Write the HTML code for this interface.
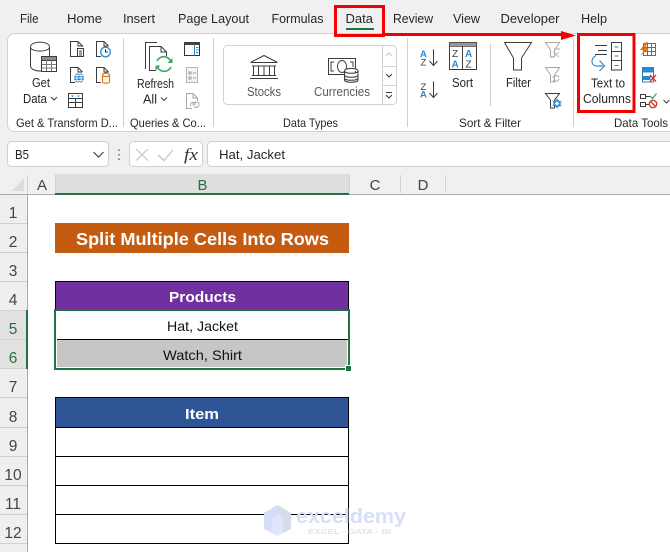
<!DOCTYPE html>
<html><head><meta charset="utf-8">
<style>
html,body{margin:0;padding:0;width:670px;height:552px;overflow:hidden;background:#f0f0f0}
svg{display:block}
text{font-family:"Liberation Sans",sans-serif;font-size:13px;fill:#262626}
.g{fill:#5a5a5a}
.n{font-size:15.5px;fill:#444;text-anchor:middle}
.b{font-weight:bold;fill:#fff}
.k{fill:none;stroke:#3c3c3c;stroke-width:1}
.l{fill:none;stroke:#a6a6a6;stroke-width:1}
.u{fill:none;stroke:#2a8bd5;stroke-width:1.2}
.m{font-size:9.5px;font-weight:bold;fill:#2a8bd5}
.z{font-size:9.5px;fill:#3c3c3c}
</style></head>
<body>
<svg width="670" height="552" viewBox="0 0 670 552" xmlns="http://www.w3.org/2000/svg">
<rect width="670" height="552" fill="#f0f0f0"/>
<!-- tabs -->
<text x="20" y="23" textLength="18.5" lengthAdjust="spacingAndGlyphs">File</text>
<text x="67" y="23" textLength="35" lengthAdjust="spacingAndGlyphs">Home</text>
<text x="123" y="23" textLength="32" lengthAdjust="spacingAndGlyphs">Insert</text>
<text x="178" y="23" textLength="71" lengthAdjust="spacingAndGlyphs">Page Layout</text>
<text x="271.500" y="23" textLength="52" lengthAdjust="spacingAndGlyphs">Formulas</text>
<text x="345.500" y="23" textLength="27.500" lengthAdjust="spacingAndGlyphs">Data</text>
<rect x="346" y="28" width="28" height="2" fill="#107c41"/>
<text x="393" y="23" textLength="40" lengthAdjust="spacingAndGlyphs">Review</text>
<text x="453" y="23" textLength="27" lengthAdjust="spacingAndGlyphs">View</text>
<text x="500.500" y="23" textLength="59" lengthAdjust="spacingAndGlyphs">Developer</text>
<text x="581" y="23" textLength="26" lengthAdjust="spacingAndGlyphs">Help</text>
<!-- ribbon -->
<rect x="7.500" y="33.500" width="690" height="98" rx="7" fill="#fff" stroke="#d2d2d2"/>
<g stroke="#d0d0d0" stroke-width="1">
<path d="M123.500 38V127M213.500 38V127M407.500 38V127M573.500 38V127M490.500 44V106"/>
</g>
<!-- Get data -->
<path class="k" d="M30.500 47V66C30.500 69 35 71 41 71M49.500 47V56M30.500 47C30.500 40.500 49.500 40.500 49.500 47C49.500 52.500 30.500 52.500 30.500 47Z" fill="#fff"/>
<rect x="41.500" y="56.500" width="15" height="15" fill="#fff" stroke="#3c3c3c"/>
<rect x="41.500" y="56.500" width="15" height="4" fill="#8c8c8c" stroke="#3c3c3c"/>
<path d="M46.500 60V71M51.500 60V71M42 64.500H56M42 68H56" stroke="#7a7a7a" fill="none"/>
<text x="32" y="87" textLength="18" lengthAdjust="spacingAndGlyphs">Get</text>
<text x="23" y="103" textLength="24" lengthAdjust="spacingAndGlyphs">Data</text>
<path class="k" d="M51 97l3 3 3-3"/>
<!-- small docs -->
<path class="k" d="M77 56.500H70.500V41.500H78L82.500 46V47M78 41.500V46H82.500"/>
<rect x="77.500" y="48.500" width="6" height="8" fill="#fff" stroke="#3c3c3c"/>
<path class="k" d="M79 51H82M79 53H82M79 55H82" stroke-width=".8"/>
<path class="k" d="M101 56.500H96.500V41.500H104L108.500 46"/>
<path class="k" d="M104 41.500V46H108.500"/>
<circle cx="105.500" cy="52" r="4.800" fill="#fff" stroke="#2a8bd5" stroke-width="1.300"/>
<path d="M105.500 49V52H108" fill="none" stroke="#333"/>
<path class="k" d="M75 82.500H70.500V67.500H78L82.500 72M78 67.500V72H82.500"/>
<circle cx="79" cy="78" r="5" fill="#2a8bd5"/>
<path d="M74 78H84M79 73C76 76 76 80 79 83M79 73C82 76 82 80 79 83M75 75.500H83M75 80.500H83" stroke="#fff" fill="none" stroke-width=".8"/>
<path class="k" d="M101 82.500H96.500V67.500H104L108.500 72M104 67.500V72H108.500"/>
<path d="M102.500 75V82C102.500 83.500 109.500 83.500 109.500 82V75M102.500 75C102.500 72.500 109.500 72.500 109.500 75C109.500 77 102.500 77 102.500 75Z" fill="#fff" stroke="#e0760f" stroke-width="1.200"/>
<rect x="68.500" y="93.500" width="14" height="14" fill="#fff" stroke="#3c3c3c"/>
<path class="k" d="M68.500 98.500H82.500M68.500 102.500H82.500M75.500 98.500V107.500"/>
<path d="M71 95.500h3l-1.500 1.500zM77 95.500h3l-1.500 1.500z" fill="#2a8bd5"/>
<!-- Refresh -->
<path class="k" d="M145.500 69V42.500H157"/>
<path class="k" d="M156 70.500H149.500V46.500H161L166.500 52V56M161 46.500V52H166.500"/>
<path d="M157 61A7.500 7.500 0 0 1 171 62" fill="none" stroke="#3ea661" stroke-width="1.600"/>
<path d="M171 67A7.500 7.500 0 0 1 157 66" fill="none" stroke="#3ea661" stroke-width="1.600"/>
<path d="M172.500 58V63H167.500zM155.500 70.500V65.500H160.500z" fill="#3ea661"/>
<text x="137" y="88" textLength="37" lengthAdjust="spacingAndGlyphs">Refresh</text>
<text x="143" y="103.500" textLength="14" lengthAdjust="spacingAndGlyphs">All</text>
<path class="k" d="M161 97.500l3 3 3-3"/>
<rect x="184.500" y="42.500" width="15" height="13" fill="#fff" stroke="#333"/>
<rect x="184.500" y="42.500" width="15" height="2.500" fill="#444"/>
<path d="M194.500 45V55.500" stroke="#2a8bd5"/>
<path d="M196 47.500h2.500M196 50h2.500M196 52.500h2.500" stroke="#2a8bd5"/>
<rect x="186.500" y="67.500" width="11" height="15" fill="#f4f4f4" stroke="#b5b5b5"/>
<path d="M189 72h2v2h-2zM189 77h2v2h-2zM193 73h3M193 78h3" fill="none" stroke="#a0a0a0"/>
<path class="l" d="M192 108.500H186.500V93.500H193L197.500 98V101M193 93.500V98H197.500"/>
<path class="l" d="M191 106c-2-3 3-5 4-3s-2 3-2 1 6-3 6 0-3 4-5 3"/>
<!-- gallery -->
<rect x="223.500" y="45.500" width="173" height="59" rx="4" fill="#fff" stroke="#d0d0d0"/>
<path d="M382.500 46V104M383 66.500H396M383 85.500H396" stroke="#d0d0d0"/>
<path d="M386 56l3-3 3 3" fill="none" stroke="#c8c8c8"/>
<path class="k" d="M386 74l3 3 3-3"/>
<path class="k" d="M386 92.500h6M386 95l3 3 3-3"/>
<path class="k" d="M250.500 62.500L264 55.500L277.500 62.500ZM252 66H276M253.500 66V75M258.500 66V75M264 66V75M269.500 66V75M274.500 66V75M252 75.500H276M250 78.500H278"/>
<text x="247" y="96" class="g" textLength="34" lengthAdjust="spacingAndGlyphs">Stocks</text>
<rect x="328.500" y="58.500" width="27" height="16" fill="#fff" stroke="#3c3c3c"/>
<path class="k" d="M334 62H331V71H334M350 62H353V67"/>
<ellipse cx="342" cy="66.500" rx="4.500" ry="6" class="k"/>
<path d="M344.500 71V80C344.500 83 358 83 358 80V71M344.500 71C344.500 67.500 358 67.500 358 71C358 74 344.500 74 344.500 71ZM344.500 75C344.500 78 358 78 358 75M344.500 78C344.500 81 358 81 358 78" fill="#fff" stroke="#3c3c3c"/>
<text x="314" y="96" class="g" textLength="56" lengthAdjust="spacingAndGlyphs">Currencies</text>
<!-- sort -->
<text x="420" y="57" class="m">A</text><text x="420.500" y="65.500" class="z">Z</text>
<path class="k" d="M433.500 49.500V65M429.500 61l4 4.500 4-4.500"/>
<text x="420.500" y="90" class="z">Z</text><text x="420" y="97.500" class="m">A</text>
<path class="k" d="M433.500 81.500V97M429.500 93l4 4.500 4-4.500"/>
<rect x="449.500" y="42.500" width="27" height="27" fill="#fff" stroke="#3c3c3c"/>
<rect x="449.500" y="42.500" width="27" height="4" fill="#999" stroke="#3c3c3c" stroke-width=".6"/>
<path class="k" d="M462.500 46V69"/>
<text x="452" y="57" class="z" style="font-size:10px">Z</text><text x="451.500" y="67.500" class="m" style="font-size:10px">A</text>
<text x="465" y="57" class="m" style="font-size:10px">A</text><text x="465.500" y="67.500" class="z" style="font-size:10px">Z</text>
<text x="452" y="87" textLength="21" lengthAdjust="spacingAndGlyphs">Sort</text>
<path fill="#fff" stroke="#3c3c3c" d="M504.500 42.500H531.500L521.500 58V70H513.500V58Z"/>
<text x="506" y="87" textLength="25" lengthAdjust="spacingAndGlyphs">Filter</text>
<path class="l" d="M545.500 42.500H559.500L554.500 50V57H550.500V50ZM554 49H560" fill="#eee"/>
<path d="M553 52l6 5M559 52l-6 5" stroke="#b8b8b8" fill="none"/>
<path class="l" d="M545.500 67.500H559.500L554.500 75V82H550.500V75Z" fill="#eee"/>
<path class="l" d="M553 78a3.500 3.500 0 0 1 6-1M559 79a3.500 3.500 0 0 1-6 1"/>
<path class="k" d="M545.500 93.500H559.500L554.500 100V108H550.500V100Z"/>
<circle cx="557" cy="103.500" r="3" fill="#fff" stroke="#2a8bd5" stroke-width="1.600"/>
<path d="M557 98.500V108.500M552.500 101L561.500 106M552.500 106L561.500 101" stroke="#2a8bd5"/>
<circle cx="557" cy="103.500" r="1.400" fill="#fff"/>
<!-- text to columns -->
<path class="k" d="M595 45.500H607M598 50.500H607M595 54.500H607"/>
<rect x="611.500" y="42.500" width="10" height="27.500" fill="#fff" stroke="#3c3c3c"/>
<path class="k" d="M611.500 51.500H621.500M611.500 60.500H621.500"/>
<path d="M614.500 47H618.500M614.500 56H618.500M614.500 65.500H618.500" stroke="#2a8bd5"/>
<path class="u" d="M596 55.500C590 59 591 66 597 66H603M599.500 60.500L604.500 66L599.500 71" />
<text x="591" y="87.500" textLength="34" lengthAdjust="spacingAndGlyphs">Text to</text>
<text x="583" y="103" textLength="48" lengthAdjust="spacingAndGlyphs">Columns</text>
<rect x="643.500" y="43.500" width="12" height="12" fill="#fff" stroke="#2b7cc4"/>
<path d="M647.500 43.500V55.500M651.500 43.500V55.500M643.500 47.500H655.500M643.500 51.500H655.500" stroke="#2b7cc4" fill="none"/>
<path d="M646 42L640 50H644L640.500 56L649 48H645L648 42Z" fill="#e0760f"/>
<rect x="642.500" y="67.500" width="11" height="14.500" fill="#fff" stroke="#2b7cc4"/>
<rect x="642.500" y="67.500" width="11" height="5" fill="#2b86d0"/>
<rect x="642.500" y="76" width="8" height="4" fill="#2b86d0"/>
<path d="M650 75l6 6.500M656 75l-6 6.500" stroke="#d9342b" stroke-width="1.300"/>
<path class="k" d="M640.500 94.500H645.500V98.500H640.500ZM640.500 102.500H645.500V106.500H640.500ZM646 96.500H650M646 104.500H650"/>
<path d="M650 96l2.500 2.500 4-5" fill="none" stroke="#3ea661" stroke-width="1.300"/>
<circle cx="653" cy="104" r="3.700" fill="#fff" stroke="#d9342b" stroke-width="1.300"/>
<path d="M650.500 101.500L655.500 106.500" stroke="#d9342b" stroke-width="1.300"/>
<path class="k" d="M663.500 100l3 3 3-3"/>
<!-- group labels -->
<text x="16" y="127" textLength="102" lengthAdjust="spacingAndGlyphs" style="font-size:12px">Get &amp; Transform D...</text>
<text x="130" y="127" textLength="76" lengthAdjust="spacingAndGlyphs" style="font-size:12px">Queries &amp; Co...</text>
<text x="283" y="127" textLength="55" lengthAdjust="spacingAndGlyphs" style="font-size:12px">Data Types</text>
<text x="459" y="127" textLength="62" lengthAdjust="spacingAndGlyphs" style="font-size:12px">Sort &amp; Filter</text>
<text x="614" y="127" textLength="54" lengthAdjust="spacingAndGlyphs" style="font-size:12px">Data Tools</text>
<!-- formula bar -->
<rect x="7.500" y="141.500" width="101" height="25" rx="4" fill="#fff" stroke="#d0d0d0"/>
<text x="15" y="159" textLength="14" lengthAdjust="spacingAndGlyphs">B5</text>
<path d="M93.500 152l5 5 5-5" fill="none" stroke="#444" stroke-width="1.200"/>
<path d="M119 149.500v1.500M119 154v1.500M119 158.500v1.500" stroke="#8a8a8a" stroke-width="2.200"/>
<rect x="129.500" y="141.500" width="73" height="25" rx="4" fill="#fff" stroke="#d0d0d0"/>
<path d="M136 149L148 160.500M148 149L136 160.500M158 155L164 160.500L173 150" fill="none" stroke="#c4c4c4" stroke-width="1.200"/>
<text x="184" y="160" style="font-family:'Liberation Serif',serif;font-style:italic;font-size:17px;fill:#333" textLength="14" lengthAdjust="spacingAndGlyphs">fx</text>
<rect x="207.500" y="141.500" width="490" height="25" rx="4" fill="#fff" stroke="#d0d0d0"/>
<text x="219" y="159" textLength="66" lengthAdjust="spacingAndGlyphs">Hat, Jacket</text>
<!-- sheet headers -->
<rect x="55" y="174" width="294" height="19" fill="#dedede"/>
<path d="M24 178V191H12Z" fill="#dcdcdc"/>
<path d="M27.500 175V194M55.500 175V193M349.500 175V193M400.500 175V193M445.500 175V193" stroke="#d2d2d2"/>
<rect x="0" y="194" width="670" height="1" fill="#aaa"/>
<rect x="55" y="193" width="294" height="2" fill="#217346"/>
<text x="42" y="190" text-anchor="middle" style="font-size:15px;fill:#444">A</text>
<text x="202.500" y="190" text-anchor="middle" style="font-size:15px;fill:#217346">B</text>
<text x="375" y="190" text-anchor="middle" style="font-size:15px;fill:#444">C</text>
<text x="423" y="190" text-anchor="middle" style="font-size:15px;fill:#444">D</text>
<!-- row headers -->
<rect x="28" y="195" width="642" height="357" fill="#fff"/>
<rect x="0" y="195" width="27" height="357" fill="#efefef"/>
<rect x="0" y="310" width="27" height="58" fill="#e1e1e1"/>
<rect x="27" y="195" width="1" height="357" fill="#a8a8a8"/>
<rect x="26" y="310" width="2" height="59" fill="#217346"/>
<path d="M0 223.500H27M0 252.500H27M0 281.500H27M0 310.500H26M0 339.500H26M0 368.500H26M0 397.500H27M0 427.500H27M0 456.500H27M0 485.500H27M0 514.500H27M0 543.500H27" stroke="#d0d0d0"/>
<text class="n" x="13" y="218">1</text>
<text class="n" x="13" y="247">2</text>
<text class="n" x="13" y="276">3</text>
<text class="n" x="13" y="305">4</text>
<text class="n" x="13" y="334" style="fill:#217346">5</text>
<text class="n" x="13" y="363" style="fill:#217346">6</text>
<text class="n" x="13" y="392">7</text>
<text class="n" x="13" y="422">8</text>
<text class="n" x="13" y="451">9</text>
<text class="n" x="13" y="480">10</text>
<text class="n" x="13" y="509">11</text>
<text class="n" x="13" y="538">12</text>
<!-- title -->
<rect x="55" y="223" width="294" height="30" fill="#c55a11"/>
<text class="b" x="76" y="245" textLength="253" lengthAdjust="spacingAndGlyphs" style="font-size:17.500px">Split Multiple Cells Into Rows</text>
<!-- products table -->
<rect x="55.500" y="281.500" width="293" height="29" fill="#7030a0" stroke="#000"/>
<text class="b" x="169" y="302" textLength="67" lengthAdjust="spacingAndGlyphs" style="font-size:15px">Products</text>
<rect x="57" y="311" width="291" height="28" fill="#fff"/>
<rect x="57" y="340" width="290" height="27" fill="#c6c6c6"/>
<rect x="57" y="339" width="291" height="1" fill="#000"/>
<text x="167" y="331" textLength="71" lengthAdjust="spacingAndGlyphs" style="font-size:14px;fill:#111">Hat, Jacket</text>
<text x="163" y="360" textLength="79" lengthAdjust="spacingAndGlyphs" style="font-size:14px;fill:#111">Watch, Shirt</text>
<rect x="55" y="310" width="294" height="59" fill="none" stroke="#217346" stroke-width="2"/>
<rect x="345.500" y="365.500" width="6" height="6" fill="#217346" stroke="#fff"/>
<!-- item table -->
<rect x="55.500" y="397.500" width="293" height="146" fill="#fff" stroke="#000"/>
<rect x="56" y="398" width="292" height="29" fill="#2f5597"/>
<path d="M55 427.500H349M55 456.500H349M55 485.500H349M55 514.500H349" stroke="#000"/>
<text class="b" x="185" y="419" textLength="34" lengthAdjust="spacingAndGlyphs" style="font-size:15px">Item</text>
<!-- watermark -->
<g>
<path d="M277.500 505L291 513V529L277.500 536L264 529V513Z" fill="#dfe6fb"/>
<path d="M277.500 505L291 513V529L283 533V517L277.500 513Z" fill="#d8dce6"/>
<path d="M264 513L277.500 505V514L272 518V532L264 529Z" fill="#d4defa"/>
<text x="296" y="523" textLength="110" lengthAdjust="spacingAndGlyphs" style="font-size:20px;font-weight:bold;fill:#d6dff9">exceldemy</text>
<text x="308" y="534" textLength="83" lengthAdjust="spacingAndGlyphs" style="font-size:7.500px;font-weight:bold;fill:#e2e3e8">EXCEL · DATA · BI</text>
</g>
<!-- red annotations -->
<rect x="335.500" y="6.500" width="48" height="29" fill="none" stroke="#f00000" stroke-width="3"/>
<rect x="578.500" y="34.500" width="55.500" height="77" fill="none" stroke="#f00000" stroke-width="3"/>
<path d="M385 33.500H562V35.500H385Z" fill="#f00000" stroke="#f00000"/>
<path d="M561 31L576 35.500L561 40Z" fill="#f00000"/>
</svg>
</body></html>
